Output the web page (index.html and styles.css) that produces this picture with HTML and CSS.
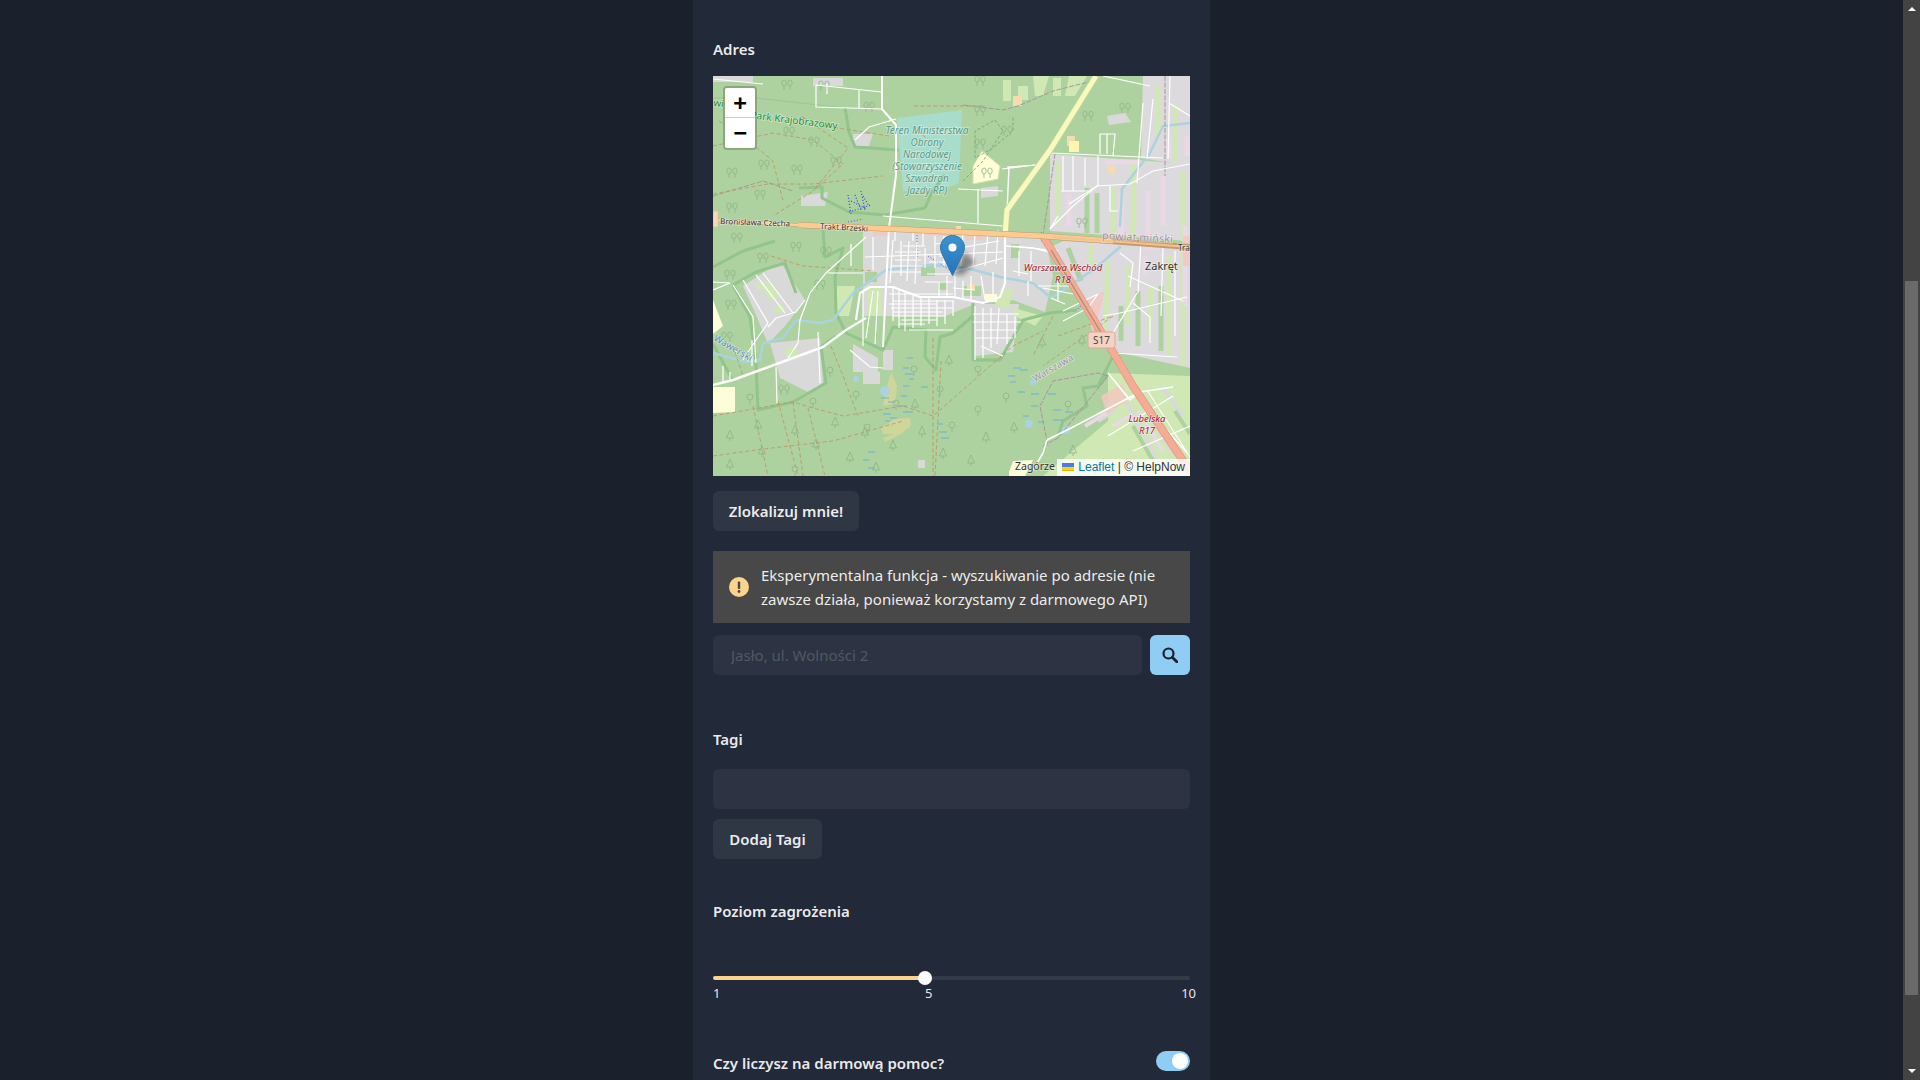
FILE: index.html
```html
<!DOCTYPE html>
<html lang="pl">
<head>
    <meta charset="UTF-8">
    <title>HelpNow</title>
    <link rel="stylesheet" href="styles.css">
</head>
<body>

<div class="page">
    <main class="main">
        <form class="card">
            <label class="field-label">Adres</label>

            <div class="map">
                <svg class="map-svg" viewBox="0 0 477 400" width="477" height="400" xmlns="http://www.w3.org/2000/svg">
                    <defs>
                        <g id="d" fill="none" stroke="#8db488" stroke-width=".8"><circle cx="0" cy="-7" r="3"/><path d="M0-4V0"/></g>
                        <g id="n" fill="none" stroke="#8db488" stroke-width=".8"><path d="M0-11-3.5-3H3.5ZM0-3V0"/></g>
                        <g id="p" fill="none" stroke="#8db488" stroke-width=".8"><ellipse cx="-3" cy="-7" rx="2.2" ry="3"/><ellipse cx="3" cy="-7" rx="2.2" ry="3"/><path d="M-3-4V0M3-4V0"/></g>
                        <filter id="blur"><feGaussianBlur stdDeviation="2.500"/></filter>
                        <filter id="soft"><feGaussianBlur stdDeviation=".35"/></filter>
                        <linearGradient id="pin" x1="0" y1="0" x2="0" y2="1"><stop offset="0" stop-color="#3f93cb"/><stop offset="1" stop-color="#2273bd"/></linearGradient>
                    </defs>

                    <rect width="477" height="400" fill="#aed1a0"/>

                    <g filter="url(#soft)">
                    <!-- landuse -->
                    <g fill="#dcdadc">
                        <path d="M337 78 477 88V165L337 155Z"/>
                        <path d="M350 165 477 172V292L395 274 340 170Z"/>
                        <path d="M430 0H477V90L428 82Z"/>
                    </g>
                    <g fill="#d9d9d9">
                        <path d="M150 150 332 160 340 200 332 236 300 224 262 228 232 240H150Z"/>
                        <path d="M260 228H306L300 276 262 280Z"/>
                        <path d="M30 210 60 190 68 187 92 224 72 250 55 268 40 232Z"/>
                        <path d="M57 267 107 262 110 307 97 317 67 302Z"/>
                        <path d="M140 268 165 282V296H140Z"/>
                        <path d="M170 274H180V294H170Z"/>
                        <path d="M150 294 167 296V308H150Z"/>
                        <path d="M100 2H130V10H100ZM0 0H40V6H0Z"/>
                        <path d="M140 58H160L156 70 140 70Z"/>
                        <path d="M88 120 115 116 112 130 88 130Z"/>
                        <path d="M394 40 412 37 418 46 396 49Z"/>
                        <path d="M268 112 285 110 285 120 268 122Z"/>
                        <path d="M205 384H212V392H205Z"/>
                    </g>
                    <g fill="none" stroke-width="5">
                        <path stroke="#cfe8b4" d="M345 85V150M400 112V160M420 86V165M462 30V85M445 10V60M470 95V165M378 170V190M395 185 392 260M415 190V250M456 180V280M470 175V290M438 210 436 260"/>
                        <path stroke="#aed1a0" d="M374 112V157M384 117V157M355 172 368 205M425 215V270M448 210V275M408 230V265"/>
                        <path stroke="#e8d9e4" d="M392 86H425M356 118V150M408 118V160M435 115V160M456 62V82M472 150V230M430 172H446M432 180V200M474 60V80M450 100V150"/>
                    </g>
                    <g fill="#cfe8b4">
                        <path d="M290 4H298V25H290ZM320 0H336L330 20H322ZM356 0H374L362 20H352ZM340 2H348V20H340ZM305 10H315V24H305Z"/>
                        <path d="M395 297 477 300V400H330L395 345Z"/>
                        <path d="M280 218 300 212 296 232 284 232Z"/>
                        <path d="M155 210H168V240H155Z"/>
                        <path d="M124 210H142L136 240H124Z"/>
                        <path d="M50 212 58 206 66 222 56 224ZM72 272H84V282H72ZM44 206H52V214H44ZM60 232 68 226 72 234 64 238Z"/>
                        <path d="M300 232 330 240 322 250 302 240Z"/>
                    </g>
                    <g fill="none" stroke-width="4">
                        <path stroke="#d9d9d9" d="M410 320 445 385M440 345 462 380M385 345 400 335M448 310 470 340"/>
                        <path stroke="#e8d9e4" d="M425 335 450 375M372 350 395 336M400 350 420 338"/>
                        <path stroke="#aed1a0" d="M420 350 440 385M462 335 477 358"/>
                    </g>
                    <g fill="#f4c8c0" opacity=".85">
                        <path d="M200 152H240L236 160 200 158Z"/>
                        <path d="M160 150H178V160H160ZM252 156H270V164H252Z"/>
                        <path d="M372 225 392 215 380 260Z"/>
                        <path d="M470 160H477V190H470Z"/>
                        <path d="M388 320 410 308 414 325 394 338Z"/>
                    </g>
                    <g fill="#aed1a0">
                        <path d="M298 168H306V182H298Z"/>
                        <path d="M208 190H222V200H208ZM250 210H268V220H250ZM225 205H235V214H225ZM152 196H164V206H152ZM170 256H178V266H170Z"/>
                    </g>
                    <g fill="#f3dcb0">
                        <path d="M216 152H222V158H216ZM243 150H248V158H243ZM300 20H309V30H300ZM354 60H362V70H354ZM395 90H402V98H395ZM254 208H262V214H254Z"/>
                    </g>
                    <path d="M184 42 249 34 246 107 225 115 190 115Z" fill="#a8dccb"/>
                    <path d="M269 75 287 90 285 103 260 108 260 90Z" fill="#ffffd8" stroke="#d8dfa8"/>
                    <path d="M0 311H22V336L0 337Z" fill="#fdfdd8"/>
                    <path d="M0 224 10 250 0 258Z" fill="#fdfdd8"/>
                    <path d="M296 396 300 385 320 384 312 400H296Z" fill="#fdfdd8"/>
                    <path d="M356 65H366V76H356Z" fill="#fdf6b0"/>
                    <path d="M272 218H284V226H272Z" fill="#fdfdd8"/>
                    <path d="M172 318 178 296 184 310 182 328 170 330Z" fill="#cfd69a"/>
                    <path d="M170 362 192 354 198 344 197 350 188 358 172 366Z" fill="#cfd69a"/>
                    <path d="M168 352 182 343 197 342 198 350 186 358 170 358Z" fill="#cfd69a"/>

                    <!-- forest edge -->
                    <g fill="none" stroke="#92c48c" stroke-width="3" stroke-linejoin="round">
                        <path d="M20 209 37 241 43 287 45 334 80 326 113 307 108 271 123 260"/>
                        <path d="M110 154 112 181 130 172 122 201 123 237 133 257 170 274 180 251 213 254 212 281 223 294 227 261 240 257 260 240"/>
                        <path d="M260 227V284H287L310 244 337 237 364 234"/>
                        <path d="M20 209 43 196 72 187 83 217"/>
                        <path d="M86 112 109 111 109 122 136 136 172 139 212 132 219 116 232 99"/>
                        <path d="M132 32 136 56 142 71 186 74"/>
                        <path d="M0 191 30 175 62 165"/>
                        <path d="M0 268 20 305"/>
                        <path d="M400 280 385 310 370 312 374 330 350 345 345 360"/>
                        <path d="M396 297 384 312"/>
                    </g>
                    <path d="M0 22H43L132 32" fill="none" stroke="#9cc59a" stroke-width="1"/>

                    <!-- water -->
                    <g fill="none" stroke="#aad3df" stroke-linecap="round">
                        <path stroke-width="2.400" d="M0 277 33 286 47 284 50 267 70 262 83 244 107 247 120 244 140 217 173 194 217 189 254 192 287 201 320 207 337 221"/>
                        <path stroke-width="2.400" d="M340 221 384 191 407 171"/>
                        <path stroke-width="2.400" d="M407 150 409 113 437 77 450 50 477 47"/>
                    </g>
                    <g fill="#aad3df">
                        <circle cx="172" cy="315" r="5"/>
                        <circle cx="143" cy="303" r="3"/>
                        <circle cx="320" cy="306" r="3"/>
                        <circle cx="353" cy="354" r="4"/>
                        <circle cx="316" cy="348" r="4"/>
                    </g>
                    </g>
                    <g stroke="#5ba7ea" stroke-width=".8">
                        <path d="M224 348h6M226 356h8M228 362h8M186 330h8M190 336h10M177 342h7M168 322h8M175 326h8M188 320h6M170 338h8M172 345h5"/>
                        <path d="M190 292h6M192 298h8M196 303h5M194 282h6M208 311h7M190 310h6"/>
                        <path d="M300 292h8M295 300h7M307 294h8M297 306h6M305 316h7M318 318h8M335 318h8M340 334h8M352 336h8M318 330h7M310 340h6M325 346h6M340 344h10"/>
                        <path d="M155 376h7M150 384h6M155 392h7"/>
                    </g>
                    <path d="M135 119 138 138M142 119 148 134M150 120 156 130M138 125 154 133M148 115 152 134M136 136 158 129" fill="none" stroke="#3349dc" stroke-width="1.200" stroke-dasharray="1 2"/>
                    <path d="M135 146 150 143M215 180 240 196M204 156 204 186M330 160 328 155M328 165 348 158M365 233 372 225" fill="none" stroke="#3349dc" stroke-width=".8" stroke-dasharray="1 2"/>

                    <!-- paths -->
                    <g fill="none" stroke="#bb935e" stroke-width=".8" stroke-dasharray="4 2.500">
                        <path d="M0 70 60 57 100 64 130 88 100 115 60 140"/>
                        <path d="M6 45 30 60 60 85 70 125"/>
                        <path d="M90 42 112 50 176 60"/>
                        <path d="M0 118 55 108 100 108 170 100"/>
                        <path d="M88 40 135 72 100 115"/>
                        <path d="M58 180 90 190 160 195"/>
                        <path d="M0 340 40 333 80 326 100 332 130 340 190 330 220 340 300 270 330 255"/>
                        <path d="M0 380 50 373 120 365 190 345"/>
                        <path d="M40 330 55 400M65 325 85 400M95 332 112 400M80 326 90 400"/>
                        <path d="M220 262V400M228 285 222 400"/>
                        <path d="M118 270 130 300 145 340"/>
                        <path d="M340 240 320 280"/>
                        <path d="M345 260 400 240 330 290"/>
                        <path d="M200 50 235 82"/>
                        <path d="M270 30H200"/>
                        <path d="M20 270 30 300"/>
                    </g>
                    <path d="M250 105 270 85 290 55 282 44 262 55 262 82 280 72 300 55 300 40" fill="none" stroke="#6ba46f" stroke-width=".8" stroke-dasharray="3 2"/>
                    <path d="M250 29 290 34 305 30 340 15 383 4M330 370 345 362 395 300 385 297 340 305 327 330 335 370M0 120 50 105 80 115M330 160 342 78M452 0V100" fill="none" stroke="#a9969b" stroke-width="1" stroke-dasharray="5 1.500"/>

                    <!-- trees -->
                    <use href="#n" x="17" y="365"/><use href="#n" x="45" y="355"/><use href="#n" x="82" y="360"/><use href="#n" x="122" y="352"/>
                    <use href="#n" x="152" y="362"/><use href="#n" x="180" y="375"/><use href="#n" x="202" y="334"/><use href="#n" x="209" y="361"/>
                    <use href="#n" x="230" y="383"/><use href="#n" x="17" y="394"/><use href="#n" x="49" y="381"/><use href="#n" x="103" y="374"/>
                    <use href="#n" x="137" y="387"/><use href="#n" x="163" y="397"/><use href="#n" x="236" y="290"/><use href="#n" x="273" y="367"/>
                    <use href="#n" x="301" y="357"/><use href="#n" x="329" y="272"/><use href="#n" x="369" y="270"/><use href="#n" x="360" y="380"/>
                    <use href="#n" x="258" y="390"/>
                    <use href="#d" x="37" y="328"/><use href="#d" x="100" y="332"/><use href="#d" x="117" y="301"/><use href="#d" x="143" y="325"/>
                    <use href="#d" x="201" y="300"/><use href="#d" x="227" y="320"/><use href="#d" x="183" y="334"/><use href="#d" x="154" y="358"/>
                    <use href="#d" x="82" y="400"/><use href="#d" x="265" y="300"/><use href="#d" x="293" y="327"/><use href="#d" x="265" y="340"/>
                    <use href="#d" x="239" y="356"/><use href="#d" x="355" y="335"/>
                    <use href="#p" x="74" y="14"/><use href="#p" x="111" y="15"/><use href="#p" x="76" y="61"/><use href="#p" x="101" y="71"/>
                    <use href="#p" x="123" y="91"/><use href="#p" x="84" y="99"/><use href="#p" x="19" y="102"/><use href="#p" x="47" y="124"/>
                    <use href="#p" x="19" y="137"/><use href="#p" x="51" y="94"/><use href="#p" x="156" y="36"/><use href="#p" x="24" y="167"/>
                    <use href="#p" x="50" y="187"/><use href="#p" x="83" y="176"/><use href="#p" x="113" y="181"/><use href="#p" x="107" y="214"/>
                    <use href="#p" x="17" y="204"/><use href="#p" x="18" y="234"/><use href="#p" x="14" y="266"/><use href="#p" x="71" y="319"/>
                    <use href="#p" x="267" y="10"/><use href="#p" x="267" y="40"/><use href="#p" x="294" y="60"/><use href="#p" x="267" y="73"/>
                    <use href="#p" x="274" y="102"/><use href="#p" x="375" y="45"/><use href="#p" x="412" y="37"/><use href="#p" x="369" y="152"/>

                    <!-- streets -->
                    <g fill="none" stroke="#fff" stroke-width="1.200">
                        <path d="M103 9 169 16M103 9V31L169 33M146 14V33M142 64 156 51 183 43M114 8V18M0 3 50 8"/>
                        <path d="M20 209 40 241 43 287M30 204 55 247 43 264 30 284M43 199 72 237M50 197 80 237M0 206 17 207 0 214M92 224 83 236 63 242 55 251M105 256 107 307M63 291 64 327M137 274 157 291 170 292M39 264V290M10 290V306M17 296V306"/>
                        <path d="M153 161 113 197 97 217 87 244 85 267 75 282M138 168V190M115 197H150"/>
                        <path d="M160 161V194M170 140 290 150M150 150 178 152M152 181 290 176M150 215V270M165 215 162 268M160 215 153 262"/>
                        <path d="M180 164 177 207M188 165V200M196 165 194 205M204 166 202 208M212 172V192M222 160V192M231 160V190M250 158 248 190M262 158 260 190M275 156 272 190M285 154 283 188M190 170H212M182 176H208M178 190H210M182 184H208"/>
                        <path d="M182 154V165M200 155V165M210 156V170M240 158V188M178 196H208M214 198H240M212 206H240M240 196 290 182M246 172 286 165M222 168 246 166M226 180H246M216 186H238"/>
                        <path d="M180 212V245M186 214V252M192 216V255M200 218V252M208 222V250M216 222V248M224 224V250M232 224V248M240 224V240M180 225H240M178 232H240M180 240H232M186 248H212M226 206V222M234 200V222M242 200V222"/>
                        <path d="M176 218H240M176 228H224M180 236H230M188 244H224M240 212 262 214M250 205V222M258 200V224M268 200 272 224M280 196V220M196 254H240"/>
                        <path d="M262 230V284M270 232V282M278 232V272M286 232 284 268M294 238V268M302 240V262M260 238H306M260 246H308M262 254H304M262 262H300M268 270 290 280"/>
                        <path d="M294 91 324 89M289 93 322 89M265 113V147M245 113 290 115M300 170 345 175M306 175V200M318 175V205M330 190H350M325 210H360M345 205V226M315 205V220"/>
                        <path d="M337 77 450 82M337 153 360 130 384 110 417 108 440 95 477 88M385 80V110M430 27 424 107M440 23 434 83M457 0 455 83M397 110V135H405M387 58H402L400 80M387 58V78M394 58V78"/>
                        <path d="M348 115H378M350 80V115M360 80V115M372 82V110M300 195 315 198M330 212 360 218M338 222 352 228"/>
                        <path d="M407 237 474 221M424 217 400 257M420 227 437 241 437 267M400 277 464 281M407 177 420 187 417 211M415 200 470 225M390 240 407 237M428 165 425 217M450 170 448 240M462 175V260"/>
                        <path d="M434 314 477 381M454 354 474 377M395 360 460 320M420 375 477 350"/>
                        <path d="M456 27 477 40M390 0 437 10"/>
                        <path d="M350 235 385 218 375 232 350 245"/>
                    </g>
                    <g fill="none" stroke="#fff" stroke-linejoin="round">
                        <path stroke-width="2.400" d="M0 309 20 304 110 271 133 254 153 242"/>
                        <path stroke-width="2.200" d="M143 244 147 217 157 211 180 211 207 221 240 221 270 227 287 221 292 207 292 160"/>
                        <path stroke-width="2" d="M169 0V33L183 49V99L176 152 173 211 170 271"/>
                        <path stroke-width="1.600" d="M395 297 417 324 427 316 460 311M334 364 360 351 427 316M334 364 330 377 320 394"/>
                        <path stroke-width="1.400" d="M292 170 320 172 345 178M296 91 294 135"/>
                        <path stroke-width="1.400" d="M337 153 345 140"/>
                        <path stroke-width="1.400" d="M356 128 384 110"/>
                    </g>

                    <!-- main roads -->
                    <path d="M383 0 337 74 294 134 292 160" fill="none" stroke="#cdd092" stroke-width="6.500"/>
                    <path d="M383 0 337 74 294 134 292 160" fill="none" stroke="#f7fabf" stroke-width="5"/>
                    <path d="M330 160 387 254 420 310 477 395" fill="none" stroke="#dd9a86" stroke-width="8"/>
                    <path d="M330 160 387 254 420 310 477 395" fill="none" stroke="#f6ab94" stroke-width="6.500"/>
                    <path d="M338 174 392 263" fill="none" stroke="#ac8f78" stroke-width="1.400"/>
                    <path d="M0 144 85 149" fill="none" stroke="#c69b6c" stroke-width="3.600"/>
                    <path d="M0 144 85 149" fill="none" stroke="#fcd09a" stroke-width="2.600"/>
                    <path d="M85 149 160 152 330 160 477 171" fill="none" stroke="#c69b6c" stroke-width="6"/>
                    <path d="M85 149 160 152 330 160 400 165" fill="none" stroke="#fbcb90" stroke-width="5"/>
                    <path d="M340 161 477 171" fill="none" stroke="#f0c492" stroke-width="2"/>
                    <rect x="0" y="135" width="5" height="16" rx="1.500" fill="#f5d8bc" stroke="#e3bd98" stroke-width=".6"/>

                    <!-- labels -->
                    <g class="map-label">
                        <text x="0" y="30" font-size="10" fill="#1d8f35" transform="rotate(7 0 30)">wi</text>
                        <text x="124" y="53" text-anchor="end" font-size="10" fill="#1d8f35" transform="rotate(7 124 53)">Park Krajobrazowy</text>
                        <g font-size="10" font-style="italic" fill="#559a89" text-anchor="middle">
                            <text x="214" y="58">Teren Ministerstwa</text>
                            <text x="214" y="70">Obrony</text>
                            <text x="214" y="82">Narodowej</text>
                            <text x="214" y="94">(Stowarzyszenie</text>
                            <text x="214" y="106">Szwadron</text>
                            <text x="214" y="118">Jazdy RP)</text>
                        </g>
                        <g font-size="8" fill="#333">
                            <text x="7" y="148" transform="rotate(2 7 148)">Bronisława Czecha</text>
                            <text x="107" y="153" transform="rotate(3 107 153)">Trakt Brzeski</text>
                            <text x="465" y="175">Tra</text>
                        </g>
                        <text x="389" y="163" font-size="10.500" fill="#a68ba8" transform="rotate(3 389 163)" letter-spacing=".2">powiat miński</text>
                        <text x="432" y="194" font-size="11" fill="#333">Zakręt</text>
                        <g font-size="9.500" font-style="italic" fill="#a2152e" text-anchor="middle">
                            <text x="350" y="195">Warszawa Wschód</text>
                            <text x="350" y="207">R18</text>
                            <text x="434" y="346">Lubelska</text>
                            <text x="434" y="358">R17</text>
                        </g>
                        <text x="322" y="306" font-size="9.500" fill="#a391ad" transform="rotate(-30 322 306)">Warszawa</text>
                        <text x="0" y="264" font-size="9.500" fill="#5b8fc2" transform="rotate(30 0 264)">Wawerski</text>
                    </g>
                    <rect x="375" y="256" width="27" height="16" rx="2.500" fill="#f6d2c4" stroke="#dca898"/>
                    <text x="388.500" y="267.500" class="map-shield" font-size="10" fill="#444" text-anchor="middle">S17</text>
                    <text x="302" y="394" class="map-label" font-size="10.500" fill="#333">Zagórze</text>

                    <!-- marker -->
                    <path d="M240 198 252 176 262 186 250 199Z" fill="#000" opacity=".4" filter="url(#blur)"/>
                    <g transform="translate(227 159)">
                        <path d="M12.500.5C5.900.5.500 5.900.500 12.500.500 15 1.500 18 3 21L12.500 40.500 22 21C23.500 18 24.500 15 24.500 12.500 24.500 5.900 19.100.5 12.500.5Z" fill="url(#pin)" stroke="#2d77b0"/>
                        <circle cx="12.500" cy="12.500" r="4" fill="#fff"/>
                    </g>
                </svg>

                <div class="zoom-box">
                    <span class="zoom-btn">+</span>
                    <span class="zoom-btn">−</span>
                </div>
                <div class="attribution">
                    <svg class="flag" viewBox="0 0 12 8" width="12" height="8"><rect width="12" height="4" fill="#4c7be1"/><rect y="4" width="12" height="4" fill="#ffd500"/><rect y="7" width="12" height="1" fill="#e0bc00"/></svg>
                    <span class="attr-link">Leaflet</span> | © HelpNow
                </div>
            </div>

            <button type="button" class="btn btn-locate">Zlokalizuj mnie!</button>

            <div class="alert">
                <svg class="alert-icon" viewBox="0 0 20 20" width="20" height="20">
                    <circle cx="10" cy="10" r="10" fill="#fbd38d"/>
                    <rect x="8.800" y="4.500" width="2.400" height="7.500" rx=".8" fill="#484848"/>
                    <circle cx="10" cy="14.500" r="1.400" fill="#484848"/>
                </svg>
                <span>Eksperymentalna funkcja - wyszukiwanie po adresie (nie zawsze działa, ponieważ korzystamy z darmowego API)</span>
            </div>

            <div class="search-row">
                <input class="input" type="text" placeholder="Jasło, ul. Wolności 2">
                <button type="button" class="btn-search">
                    <svg viewBox="0 0 16 16" width="16" height="16" fill="none" stroke="#1a202c">
                        <circle cx="6.500" cy="6.500" r="5" stroke-width="2.200"/>
                        <path d="M10.500 10.500 14.800 14.800" stroke-width="2.800" stroke-linecap="round"/>
                    </svg>
                </button>
            </div>

            <label class="field-label label-tags">Tagi</label>
            <input class="input input-tags" type="text">
            <button type="button" class="btn btn-tags">Dodaj Tagi</button>

            <label class="field-label label-level">Poziom zagrożenia</label>
            <div class="slider">
                <div class="slider-fill"></div>
                <div class="slider-thumb"></div>
            </div>
            <div class="slider-marks">
                <span>1</span>
                <span>5</span>
                <span>10</span>
            </div>

            <div class="switch-row">
                <label class="field-label">Czy liczysz na darmową pomoc?</label>
                <div class="switch"><div class="switch-thumb"></div></div>
            </div>
        </form>
    </main>

    <div class="scrollbar">
        <div class="arrow-up"></div>
        <div class="thumb"></div>
        <div class="arrow-down"></div>
    </div>
</div>

</body>
</html>
```

FILE: styles.css
```css
* {
    box-sizing: border-box;
}
body {
    margin: 0;
    background: #1a202c;
    color: rgba(255,255,255,0.92);
    font-family: "Noto Sans", sans-serif;
    font-size: 15px;
    line-height: 24px;
}
.page {
    display: flex;
    height: 1080px;
    overflow: hidden;
}
.main {
    flex: 1;
    display: flex;
    justify-content: center;
}
.card {
    width: 517px;
    height: 1080px;
    padding: 37px 20px 0;
    background: #222938;
}
.field-label {
    display: block;
    font-weight: 600;
    font-size: 15px;
    height: 24px;
}

/* mapa */
.map {
    position: relative;
    width: 477px;
    height: 400px;
    margin-top: 15px;
    overflow: hidden;
}
.map-svg {
    display: block;
}
.map-label text, text.map-label, .map-shield {
    font-family: "Noto Sans", sans-serif;
    paint-order: stroke;
}
.map-label text, text.map-label {
    stroke: rgba(255,255,255,0.45);
    stroke-width: 1.5px;
}
.zoom-box {
    position: absolute;
    left: 10px;
    top: 10px;
    width: 34px;
    border: 2px solid rgba(0,0,0,0.2);
    border-radius: 4px;
    background-clip: padding-box;
}
.zoom-btn {
    display: block;
    height: 30px;
    background: #fff;
    color: #000;
    text-align: center;
    font: bold 22px/30px "DejaVu Sans Mono", monospace;
    border-bottom: 1px solid #ccc;
}
.zoom-btn:first-child {
    border-radius: 2px 2px 0 0;
}
.zoom-btn:last-child {
    border-bottom: none;
    border-radius: 0 0 2px 2px;
}
.attribution {
    position: absolute;
    right: 0;
    bottom: 0;
    height: 17px;
    padding: 0 5px;
    background: rgba(255,255,255,0.8);
    color: #333;
    font: 12px/17px "Liberation Sans", sans-serif;
    white-space: nowrap;
}
.attr-link {
    color: #0078a8;
}
.flag {
    margin-right: 1px;
}

/* przyciski */
.btn {
    display: block;
    height: 40px;
    padding: 0 15px;
    border: none;
    border-radius: 6px;
    background: #2f3644;
    color: rgba(255,255,255,0.92);
    font-family: "Noto Sans", sans-serif;
    font-size: 15px;
    font-weight: 600;
    white-space: nowrap;
}
.btn-locate {
    width: 146px;
    margin-top: 15px;
}
.alert {
    display: flex;
    align-items: center;
    height: 72px;
    margin-top: 20px;
    padding: 12px 16px;
    background: #484848;
    font-size: 15px;
}
.alert-icon {
    flex-shrink: 0;
    margin-right: 12px;
}
.search-row {
    display: flex;
    gap: 8px;
    margin-top: 12px;
}
.input {
    display: block;
    width: 100%;
    height: 40px;
    padding: 0 18px;
    border: none;
    border-radius: 6px;
    background: #2d3342;
    color: #fff;
    font-family: "Noto Sans", sans-serif;
    font-size: 15px;
}
.input::placeholder {
    color: #515865;
}
.btn-search {
    flex: 0 0 40px;
    height: 40px;
    padding: 0;
    border: none;
    border-radius: 6px;
    background: #90cdf4;
    display: flex;
    align-items: center;
    justify-content: center;
}
.label-tags {
    margin-top: 52px;
}
.input-tags {
    margin-top: 18px;
}
.btn-tags {
    width: 109px;
    margin-top: 10px;
}
.label-level {
    margin-top: 40px;
}

/* suwak */
.slider {
    position: relative;
    height: 4px;
    margin-top: 53px;
    border-radius: 2px;
    background: #333a48;
}
.slider-fill {
    width: 212px;
    height: 4px;
    border-radius: 2px;
    background: #fbd38d;
}
.slider-thumb {
    position: absolute;
    left: 205px;
    top: -5px;
    width: 14px;
    height: 14px;
    border-radius: 50%;
    background: #fff;
}
.slider-marks {
    display: grid;
    grid-template-columns: 212px 1fr auto;
    margin: 4px -6px 0 0;
    font-size: 13px;
    line-height: 18px;
}
.switch-row {
    display: flex;
    justify-content: space-between;
    margin-top: 49px;
}
.switch {
    width: 34px;
    height: 20px;
    padding: 2px;
    border-radius: 10px;
    background: #90cdf4;
}
.switch-thumb {
    width: 16px;
    height: 16px;
    margin-left: 14px;
    border-radius: 50%;
    background: #fff;
}

/* pasek przewijania */
.scrollbar {
    position: relative;
    flex: 0 0 17px;
    background: #434343;
    display: flex;
    flex-direction: column;
    align-items: center;
}
.arrow-up, .arrow-down {
    width: 0;
    height: 0;
    border-left: 4px solid transparent;
    border-right: 4px solid transparent;
}
.arrow-up {
    margin-top: 7px;
    border-bottom: 4px solid #fff;
}
.arrow-down {
    margin-top: 74px;
    border-top: 4px solid #fff;
}
.thumb {
    width: 13px;
    height: 714px;
    margin-top: 270px;
    background: #6a6a6a;
}
```
